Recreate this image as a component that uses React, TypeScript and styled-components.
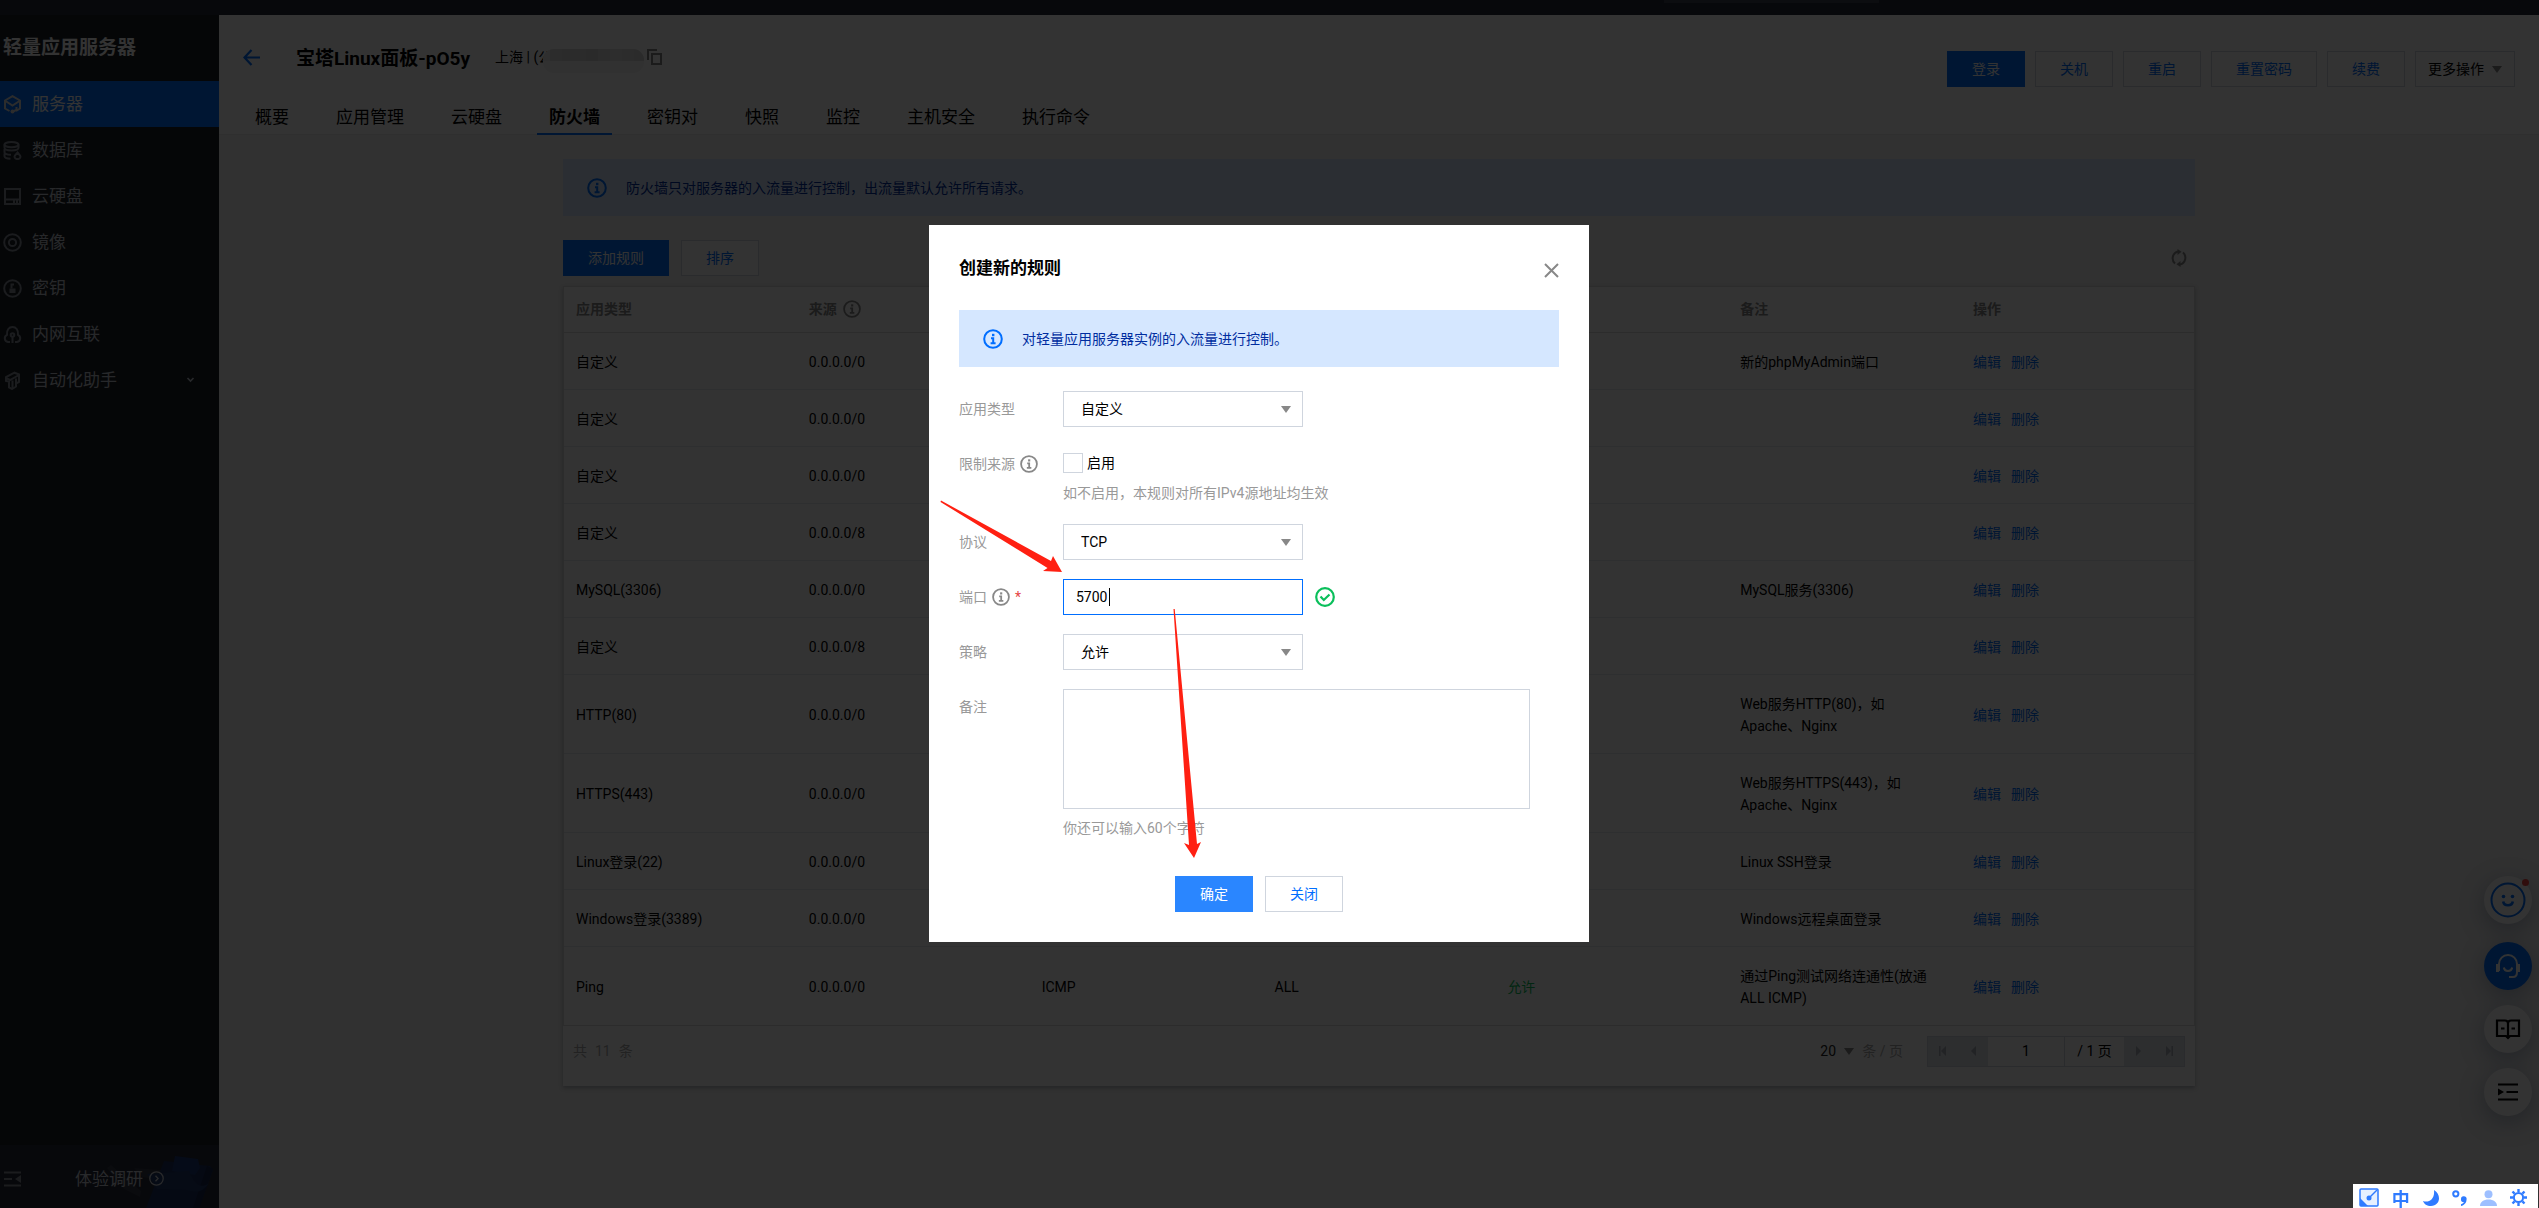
import React from "react";
import styled, { createGlobalStyle, css } from "styled-components";

const color = {
  primary: "#006eff",
  ink: "#000",
  muted: "#888",
  soft: "#999",
  faint: "#aaa",
  line: "#cfd5de",
  softLine: "#e7eaef",
  notice: "#d5e7ff",
  noticeText: "#002da0",
  side: "#1a1f27",
};

const GlobalStyle = createGlobalStyle`
  *, *::before, *::after { box-sizing: border-box; }
  body {
    margin: 0;
    background: #f2f2f2;
    color: ${color.ink};
    font: 14px/22px Roboto, "Noto Sans CJK SC", sans-serif;
  }
  button, input, select, textarea { font: inherit; color: inherit; margin: 0; }
  a { color: inherit; text-decoration: none; }
  svg { display: block; flex: none; }
`;

/* ---------- shared parts ---------- */

const Button = styled.button<{ $primary?: boolean; $bright?: boolean; $menu?: boolean }>`
  display: inline-flex;
  align-items: center;
  justify-content: center;
  gap: 8px;
  height: 36px;
  padding: 0 ${(p) => (p.$menu ? 12 : 24)}px;
  border: 1px solid ${color.line};
  background: #fff;
  color: ${(p) => (p.$menu ? color.ink : color.primary)};
  white-space: nowrap;
  cursor: pointer;
  ${(p) =>
    p.$primary &&
    css`
      border-color: ${p.$bright ? "#2a86ff" : color.primary};
      background: ${p.$bright ? "#2a86ff" : color.primary};
      color: #fff;
    `}
`;

const IconButton = styled.button`
  display: flex;
  padding: 0;
  border: 0;
  background: none;
  cursor: pointer;
`;

const Notice = styled.div`
  display: flex;
  align-items: center;
  gap: 19px;
  height: 57px;
  padding: 0 24px;
  background: ${color.notice};
  color: ${color.noticeText};
`;

const InfoIcon = ({ size = 18, tint = color.muted }: { size?: number; tint?: string }) => (
  <svg width={size} height={size} viewBox="0 0 20 20" fill="none" stroke={tint}>
    <circle cx="10" cy="10" r="8.8" strokeWidth="2" />
    <path d="M10.2 4.8v2.4" strokeWidth="2.4" />
    <path d="M8 9.2h2.2v5M7.600 14.2h5" strokeWidth="2" />
  </svg>
);

const Caret = ({ tint = color.muted }: { tint?: string }) => (
  <svg width="10" height="7" viewBox="0 0 10 7">
    <path d="M0 0h10L5 7z" fill={tint} />
  </svg>
);

/* ---------- page frame ---------- */

const Page = styled.div`
  display: flex;
  flex-direction: column;
  min-height: 100vh;
`;

const TopBar = styled.div`
  height: 15px;
  background: #262b3b;
`;

const TopBarTab = styled.div`
  width: 215px;
  height: 3px;
  margin: 0 660px 0 auto;
  background: #3c4150;
`;

const Columns = styled.div`
  display: flex;
  flex: 1;
`;

/* ---------- side navigation ---------- */

const Sidebar = styled.aside`
  display: flex;
  flex-direction: column;
  flex: none;
  width: 219px;
  background: ${color.side};
`;

const SideTitle = styled.h1`
  margin: 0;
  padding-left: 3px;
  color: #fff;
  font-size: 19px;
  line-height: 66px;
`;

const SideLink = styled.a<{ $active?: boolean }>`
  display: flex;
  align-items: center;
  gap: 10px;
  height: 46px;
  padding: 0 24px 0 3px;
  font-size: 17px;
  background: ${(p) => (p.$active ? color.primary : "transparent")};
  color: ${(p) => (p.$active ? "#fff" : "#c4c8d0")};
`;

const SideLabel = styled.span`
  flex: 1;
`;

const SideFoot = styled.div`
  position: relative;
  display: flex;
  align-items: center;
  height: 63px;
  margin-top: auto;
  padding: 4px 0 0 4px;
  overflow: hidden;
  background: #242838;
  color: #c9ccd4;
`;

const SurveyLink = styled.a`
  position: relative;
  display: flex;
  align-items: center;
  gap: 6px;
  margin-left: 54px;
  font-size: 17px;
`;

const Artwork = styled.svg`
  position: absolute;
  right: 0;
  bottom: 0;
`;

const strokeIcon = {
  width: 19,
  height: 19,
  viewBox: "0 0 19 19",
  fill: "none",
  stroke: "currentColor",
  strokeWidth: 2,
};

const dim = "#868b96";

const sideItems = [
  {
    label: "服务器",
    active: true,
    icon: (
      <svg {...strokeIcon} stroke="#ddd">
        <path d="M6.500 16L2 13.500V5.500L9.500 1.200 17 5.500v8L13 16" />
        <path d="M2.500 6L9.500 10.500 16.500 6" />
        <circle cx="9.500" cy="16.500" r="2" fill="#ddd" stroke="none" />
        <path d="M9.500 16.500l4-1.500v-3" />
      </svg>
    ),
  },
  {
    label: "数据库",
    icon: (
      <svg {...strokeIcon} stroke={dim}>
        <ellipse cx="8.500" cy="3.600" rx="7" ry="2.600" />
        <path d="M1.500 3.600v3.200c0 1.600 3 2.700 7 2.700s7-1.100 7-2.700V3.600" />
        <path d="M1.500 8v3.200c0 1.400 2.600 2.400 6.500 2.600M1.500 12.500v2.700c0 1.400 2.200 2.300 6 2.600" />
        <path d="M14.500 11.500l2.600 3a2.300 2.300 0 0 1-1.600 3.500h-2a2.300 2.300 0 0 1-1.600-3.500z" />
      </svg>
    ),
  },
  {
    label: "云硬盘",
    icon: (
      <svg {...strokeIcon} stroke={dim}>
        <path d="M2 2h15v15H2zM2 12.500h15M11 13v4M14 13v4" />
      </svg>
    ),
  },
  {
    label: "镜像",
    icon: (
      <svg {...strokeIcon} stroke={dim}>
        <circle cx="9.500" cy="9.500" r="8.300" />
        <circle cx="9.500" cy="9.500" r="3.600" />
      </svg>
    ),
  },
  {
    label: "密钥",
    icon: (
      <svg {...strokeIcon} stroke={dim}>
        <circle cx="9.500" cy="9.500" r="8.300" />
        <path d="M8.500 9.500V5.500h2.500" />
        <path d="M6.500 9.500h6v4.500h-6z" fill={dim} stroke="none" />
      </svg>
    ),
  },
  {
    label: "内网互联",
    icon: (
      <svg {...strokeIcon} stroke={dim}>
        <path d="M7 17H5a3.800 3.800 0 0 1-1-7.200C3.600 4.800 6 2 9.500 2s5.900 2.800 5.500 7.800A3.800 3.800 0 0 1 14 17h-2" />
        <circle cx="9.500" cy="10" r="1.800" />
        <path d="M9.500 11v7" />
      </svg>
    ),
  },
  {
    label: "自动化助手",
    expandable: true,
    icon: (
      <svg {...strokeIcon} stroke={dim}>
        <path d="M3 10V6l8.500-4.300L16 3.500V11l-3 1.500v3L9 18l-3-1.500v-6z" />
        <path d="M3 7l4 2 9-5M9.500 9.500V17M13 7.500v6" />
      </svg>
    ),
  },
];

const Side = () => (
  <Sidebar>
    <SideTitle>轻量应用服务器</SideTitle>
    <nav>
      {sideItems.map((item) => (
        <SideLink key={item.label} href="#" $active={item.active}>
          {item.icon}
          <SideLabel>{item.label}</SideLabel>
          {item.expandable && (
            <svg width="9" height="6" viewBox="0 0 9 6" fill="none" stroke="currentColor" strokeWidth="1.6">
              <path d="M1.500 1l3 3 3-3" />
            </svg>
          )}
        </SideLink>
      ))}
    </nav>
    <SideFoot>
      <Artwork width="120" height="56" viewBox="0 0 120 56">
        <path d="M8 16l4-3 30 26-1 6-16-8zM35 16l40 3-8 10-24-4z" fill="#343946" />
        <path d="M47 56L65 9l10 1 36 4 3 4-14 38z" fill="#1b2f5e" />
        <path d="M108 14l6 3-14 39h-6z" fill="#14244c" />
        <path d="M76 4l23 3 2 9-5 7-23-4z" fill="#1d3a78" />
        <path d="M48 22l42-3c6 14 12 18 20 12-6 10-14 10-22 7l-30-1z" fill="#1f3768" />
      </Artwork>
      <IconButton aria-label="收起菜单">
        <svg width="17" height="16" viewBox="0 0 17 16" fill="none" stroke={dim} strokeWidth="2">
          <path d="M0 1.500h17M0 14.500h17M0 8h8" />
          <path d="M17 4v8l-6-4z" fill={dim} stroke="none" />
        </svg>
      </IconButton>
      <SurveyLink href="#">
        体验调研
        <svg width="15" height="15" viewBox="0 0 15 15" fill="none" stroke="currentColor" strokeWidth="1.3">
          <circle cx="7.500" cy="7.500" r="6.700" />
          <path d="M6.500 4.800l2.600 2.700-2.600 2.700" />
        </svg>
      </SurveyLink>
    </SideFoot>
  </Sidebar>
);

/* ---------- instance header ---------- */

const Main = styled.main`
  flex: 1;
  min-width: 0;
`;

const Header = styled.header`
  background: #fff;
  border-bottom: 1px solid #e8e8e8;
`;

const InfoRow = styled.div`
  display: flex;
  align-items: center;
  height: 84px;
  padding: 0 24px;
`;

const InstanceName = styled.h2`
  margin: 4px 0 0 36px;
  font-size: 19px;
  line-height: 24px;
  white-space: nowrap;
`;

const Region = styled.div`
  display: flex;
  align-items: center;
  gap: 3px;
  margin-left: 25px;
  white-space: nowrap;
`;

const Mask = styled.svg`
  margin: 8px 0 0 -12px;
`;

const Actions = styled.div`
  display: flex;
  gap: 10px;
  margin: 24px 0 0 auto;
`;

const Tabs = styled.nav`
  display: flex;
  gap: 23px;
  height: 35px;
  padding-left: 24px;
`;

const Tab = styled.a<{ $active?: boolean }>`
  height: 36px;
  padding: 0 12px;
  border-bottom: 2px solid ${(p) => (p.$active ? color.primary : "transparent")};
  font-size: 17px;
  line-height: 36px;
  font-weight: ${(p) => (p.$active ? 700 : 400)};
`;

const tabs = ["概要", "应用管理", "云硬盘", "防火墙", "密钥对", "快照", "监控", "主机安全", "执行命令"];

const maskTiles = ["#e8e8e8", "#dcdcdc", "#d4d4d4", "#d8d8d8", "#d2d2d2", "#d9d9d9", "#dedede", "#dadada", "#d6d6d6"];

const InstanceHeader = () => (
  <Header>
    <InfoRow>
      <IconButton aria-label="返回">
        <svg width="17" height="17" viewBox="0 0 17 17" fill="none" stroke={color.primary} strokeWidth="2.2">
          <path d="M17 8.500H2M8.500 1L1.500 8.500l7 7.500" />
        </svg>
      </IconButton>
      <InstanceName>宝塔Linux面板-pO5y</InstanceName>
      <Region>
        <span>上海 | (公</span>
        <Mask width="101" height="24" viewBox="0 0 101 24">
          <clipPath id="mask">
            <rect width="101" height="24" rx="11" />
          </clipPath>
          <g clipPath="url(#mask)">
            <rect width="101" height="24" fill="#f5f5f5" />
            {maskTiles.map((fill, i) => (
              <rect key={i} x={i * 12 - 5} width="12" height="12" fill={fill} />
            ))}
          </g>
        </Mask>
        <IconButton aria-label="复制">
          <svg width="15" height="16" viewBox="0 0 15 16" fill="none" stroke={color.muted} strokeWidth="2">
            <path d="M1 11V1h9M5 5h9v10H5z" />
          </svg>
        </IconButton>
      </Region>
      <Actions>
        <Button $primary>登录</Button>
        <Button>关机</Button>
        <Button>重启</Button>
        <Button>重置密码</Button>
        <Button>续费</Button>
        <Button $menu>
          更多操作
          <Caret />
        </Button>
      </Actions>
    </InfoRow>
    <Tabs>
      {tabs.map((t) => (
        <Tab key={t} href="#" $active={t === "防火墙"}>
          {t}
        </Tab>
      ))}
    </Tabs>
  </Header>
);

/* ---------- rules table ---------- */

const Content = styled.section`
  max-width: 1632px;
  margin: 0 auto;
  padding: 24px 0;
`;

const Toolbar = styled.div`
  display: flex;
  align-items: center;
  gap: 12px;
  margin: 24px 0 10px;
`;

const RefreshButton = styled(IconButton)`
  margin: 0 8px 0 auto;
`;

const Card = styled.div`
  background: #fff;
  box-shadow: 0 2px 4px rgba(54, 58, 80, 0.32);
`;

const Table = styled.table`
  width: 100%;
  border: 1px solid #ddd;
  border-collapse: separate;
  border-spacing: 0;
  table-layout: fixed;
`;

const Th = styled.th`
  padding: 11px 12px 12px;
  border-bottom: 1px solid #ddd;
  color: ${color.muted};
  text-align: left;
`;

const Td = styled.td`
  padding: 18px 12px 16px;
  border-bottom: 1px solid ${color.softLine};
  tr:last-child & {
    border-bottom: 0;
  }
`;

const Inline = styled.span`
  display: flex;
  align-items: center;
  gap: 6px;
`;

const RowLinks = styled.span`
  display: flex;
  gap: 10px;
  color: ${color.primary};
`;

const Allowed = styled.span`
  color: #0abf5b;
`;

const Footer = styled.div`
  display: flex;
  align-items: center;
  height: 60px;
  padding: 0 10px 10px;
  color: ${color.faint};
`;

const Total = styled.span`
  display: flex;
  gap: 8px;
  margin-right: auto;
`;

const PageSize = styled.label`
  position: relative;
  display: flex;
  align-items: center;
  margin-right: 24px;
`;

const SizeSelect = styled.select`
  width: 42px;
  padding: 0;
  border: 0;
  background: none;
  color: #222;
  appearance: none;
`;

const SizeCaret = styled.span`
  position: absolute;
  left: 24px;
  pointer-events: none;
`;

const Pager = styled.div`
  display: flex;
  height: 31px;
  border: 1px solid ${color.line};
  color: ${color.ink};
  > * + * {
    border-left: 1px solid ${color.line};
  }
`;

const PagerButton = styled.button`
  display: flex;
  align-items: center;
  justify-content: center;
  width: 30px;
  padding: 0;
  border: 0;
  background: #dfe3e9;
`;

const PagerInput = styled.input`
  width: 76px;
  padding: 0;
  border: 0;
  background: #fff;
  text-align: center;
`;

const PagerTotal = styled.span`
  width: 60px;
  line-height: 29px;
  text-align: center;
`;

const PagerArrow = ({ back, bar }: { back?: boolean; bar?: boolean }) => (
  <svg width="10" height="12" viewBox="0 0 10 12" fill="#a9afb8">
    <path d={back ? "M8 1v10L3 6z" : "M2 1v10l5-5z"} />
    {bar && <path d={back ? "M1 1h1.500v10H1z" : "M7.500 1H9v10H7.500z"} />}
  </svg>
);

type Rule = { type: string; source: string; protocol: string; port: string; remark: string[] };

const rule = (type: string, source: string, protocol: string, port: string, ...remark: string[]): Rule => ({
  type,
  source,
  protocol,
  port,
  remark,
});

const rules: Rule[] = [
  rule("自定义", "0.0.0.0/0", "TCP", "888", "新的phpMyAdmin端口"),
  rule("自定义", "0.0.0.0/0", "TCP", "8888"),
  rule("自定义", "0.0.0.0/0", "TCP", "8080"),
  rule("自定义", "0.0.0.0/8", "TCP", "21"),
  rule("MySQL(3306)", "0.0.0.0/0", "TCP", "3306", "MySQL服务(3306)"),
  rule("自定义", "0.0.0.0/8", "TCP", "20"),
  rule("HTTP(80)", "0.0.0.0/0", "TCP", "80", "Web服务HTTP(80)，如", "Apache、Nginx"),
  rule("HTTPS(443)", "0.0.0.0/0", "TCP", "443", "Web服务HTTPS(443)，如", "Apache、Nginx"),
  rule("Linux登录(22)", "0.0.0.0/0", "TCP", "22", "Linux SSH登录"),
  rule("Windows登录(3389)", "0.0.0.0/0", "TCP", "3389", "Windows远程桌面登录"),
  rule("Ping", "0.0.0.0/0", "ICMP", "ALL", "通过Ping测试网络连通性(放通", "ALL ICMP)"),
];

const Firewall = () => (
  <Content>
    <Notice>
      <InfoIcon size={20} tint={color.primary} />
      防火墙只对服务器的入流量进行控制，出流量默认允许所有请求。
    </Notice>
    <Toolbar>
      <Button $primary>添加规则</Button>
      <Button>排序</Button>
      <RefreshButton aria-label="刷新">
        <svg width="16" height="18" viewBox="0 0 16 18" fill="none" stroke={color.muted} strokeWidth="2">
          <path d="M4 14.500A7 7 0 0 1 7 2.500M12 3.500a7 7 0 0 1-3 12" />
          <path d="M6.500 0v6l4-3.200zM9.500 18v-6l-4 3.200z" fill={color.muted} stroke="none" />
        </svg>
      </RefreshButton>
    </Toolbar>
    <Card>
      <Table>
        <thead>
          <tr>
            <Th>应用类型</Th>
            <Th>
              <Inline>
                来源 <InfoIcon />
              </Inline>
            </Th>
            <Th>协议</Th>
            <Th>端口</Th>
            <Th>策略</Th>
            <Th>备注</Th>
            <Th>操作</Th>
          </tr>
        </thead>
        <tbody>
          {rules.map((r, i) => (
            <tr key={i}>
              <Td>{r.type}</Td>
              <Td>{r.source}</Td>
              <Td>{r.protocol}</Td>
              <Td>{r.port}</Td>
              <Td>
                <Allowed>允许</Allowed>
              </Td>
              <Td>
                {r.remark.map((line, n) => (
                  <div key={n}>{line}</div>
                ))}
              </Td>
              <Td>
                <RowLinks>
                  <a href="#">编辑</a>
                  <a href="#">删除</a>
                </RowLinks>
              </Td>
            </tr>
          ))}
        </tbody>
      </Table>
      <Footer>
        <Total>
          <span>共</span>
          <span>11</span>
          <span>条</span>
        </Total>
        <PageSize>
          <SizeSelect defaultValue="20">
            <option>20</option>
            <option>50</option>
          </SizeSelect>
          <SizeCaret>
            <Caret />
          </SizeCaret>
          条 / 页
        </PageSize>
        <Pager>
          <PagerButton aria-label="首页">
            <PagerArrow back bar />
          </PagerButton>
          <PagerButton aria-label="上一页">
            <PagerArrow back />
          </PagerButton>
          <PagerInput aria-label="页码" defaultValue="1" />
          <PagerTotal>/ 1 页</PagerTotal>
          <PagerButton aria-label="下一页">
            <PagerArrow />
          </PagerButton>
          <PagerButton aria-label="末页">
            <PagerArrow bar />
          </PagerButton>
        </Pager>
      </Footer>
    </Card>
  </Content>
);

/* ---------- floating helpers ---------- */

const FloatBar = styled.div`
  position: fixed;
  right: 7px;
  bottom: 92px;
  display: flex;
  flex-direction: column;
  gap: 15px;
`;

const FloatButton = styled.button<{ $primary?: boolean }>`
  position: relative;
  display: flex;
  align-items: center;
  justify-content: center;
  width: 48px;
  height: 48px;
  padding: 0;
  border: 0;
  border-radius: 50%;
  background: ${(p) => (p.$primary ? color.primary : "#fff")};
  box-shadow: 0 6px 24px rgba(60, 80, 120, 0.4);
  &:first-child {
    margin-bottom: 3px;
  }
`;

const Dot = styled.span`
  position: absolute;
  top: 3px;
  right: 3px;
  width: 7px;
  height: 7px;
  border-radius: 50%;
  background: #f0413c;
`;

const Helpers = () => (
  <FloatBar>
    <FloatButton aria-label="反馈">
      <svg width="36" height="36" viewBox="0 0 36 36" fill="none" stroke={color.primary} strokeWidth="2">
        <circle cx="18" cy="18" r="16.500" />
        <path d="M13.200 19.500c.8 5 8.800 5 9.600 0" strokeWidth="2.600" />
        <circle cx="13.500" cy="14.500" r="1.800" fill={color.primary} stroke="none" />
        <circle cx="22.500" cy="14.500" r="1.800" fill={color.primary} stroke="none" />
      </svg>
      <Dot />
    </FloatButton>
    <FloatButton $primary aria-label="客服">
      <svg width="26" height="26" viewBox="0 0 26 26" fill="none" stroke="#fff" strokeWidth="2">
        <path d="M4 18V11a9 9 0 0 1 18 0v8c0 3-1 5-4 5h-4" />
        <path d="M1 11h3v8H1zM22 11h3v8h-3z" fill="#fff" stroke="none" />
        <path d="M8.800 14.500c.8 4.500 7.600 4.500 8.400 0" />
      </svg>
    </FloatButton>
    <FloatButton aria-label="文档">
      <svg width="26" height="22" viewBox="0 0 26 22" fill="none" stroke="#000" strokeWidth="2.2">
        <path d="M2 2.500h8c2 0 3 1 3 3 0-2 1-3 3-3h8v15.500h-9l-2 2-2-2H2zM13 5v14" />
        <path d="M6 10.500h3.500M16.500 10.500H20" />
      </svg>
    </FloatButton>
    <FloatButton aria-label="目录">
      <svg width="20" height="18" viewBox="0 0 20 18" fill="none" stroke="#000" strokeWidth="2.2">
        <path d="M0 1.500h20M8.500 9H20M0 16.500h20" />
        <path d="M0 5.500v7L6 9z" fill="#000" stroke="none" />
      </svg>
    </FloatButton>
  </FloatBar>
);

/* ---------- dialog ---------- */

const Overlay = styled.div`
  position: fixed;
  inset: 0;
  display: flex;
  align-items: flex-start;
  justify-content: center;
  padding: 225px 21px 0 0;
  background: rgba(0, 0, 0, 0.8);
`;

const Dialog = styled.form`
  position: relative;
  width: 660px;
  padding: 30px;
  background: #fff;
`;

const DialogHead = styled.div`
  display: flex;
  align-items: center;
  justify-content: space-between;
  height: 26px;
  margin-bottom: 29px;
`;

const DialogTitle = styled.h3`
  margin: 0;
  font-size: 17px;
`;

const CloseButton = styled(IconButton)`
  padding-top: 4px;
`;

const Fields = styled.div`
  display: grid;
  grid-template-columns: 104px 1fr;
  row-gap: 19px;
  margin-top: 24px;
`;

const Label = styled.label`
  display: flex;
  align-items: center;
  gap: 5px;
  height: 36px;
  color: ${color.soft};
`;

const Required = styled.span`
  color: #e54545;
`;

const Control = styled.div`
  position: relative;
`;

const Select = styled.select`
  display: block;
  width: 240px;
  height: 36px;
  padding: 0 17px;
  border: 1px solid ${color.line};
  border-radius: 0;
  background: #fff;
  appearance: none;
`;

const SelectCaret = styled.span`
  position: absolute;
  top: 15px;
  left: 218px;
  pointer-events: none;
`;

const CheckLabel = styled.label`
  display: flex;
  align-items: center;
  gap: 4px;
  height: 36px;
  padding-bottom: 2px;
`;

const Checkbox = styled.input`
  width: 20px;
  height: 20px;
  border: 1px solid ${color.line};
  background: #fff;
  appearance: none;
`;

const Hint = styled.div`
  line-height: 23px;
  color: ${color.soft};
`;

const PortRow = styled.div`
  position: relative;
  display: flex;
  align-items: center;
  gap: 12px;
`;

const PortInput = styled.input`
  width: 240px;
  height: 36px;
  padding: 0 12px;
  border: 1px solid ${color.primary};
  border-radius: 0;
  outline: 0;
`;

const TextCursor = styled.span`
  position: absolute;
  top: 9px;
  left: 46px;
  width: 1px;
  height: 18px;
  background: #000;
`;

const Remark = styled.textarea`
  display: block;
  width: 467px;
  height: 120px;
  margin-bottom: 8px;
  border: 1px solid ${color.line};
  border-radius: 0;
  resize: none;
`;

const DialogFoot = styled.div`
  display: flex;
  justify-content: center;
  gap: 12px;
  margin-top: 36px;
`;

const Annotations = styled.svg`
  position: absolute;
  top: 0;
  left: 0;
  pointer-events: none;
`;

const SelectField = ({ id, options }: { id: string; options: string[] }) => (
  <Control>
    <Select id={id}>
      {options.map((o) => (
        <option key={o}>{o}</option>
      ))}
    </Select>
    <SelectCaret>
      <Caret />
    </SelectCaret>
  </Control>
);

const RuleDialog = () => (
  <Overlay>
    <Dialog role="dialog" aria-labelledby="dialog-title" onSubmit={(e) => e.preventDefault()}>
      <DialogHead>
        <DialogTitle id="dialog-title">创建新的规则</DialogTitle>
        <CloseButton type="button" aria-label="关闭窗口">
          <svg width="15" height="15" viewBox="0 0 15 15" stroke={color.muted} strokeWidth="2">
            <path d="M1 1l13 13M14 1L1 14" />
          </svg>
        </CloseButton>
      </DialogHead>
      <Notice>
        <InfoIcon size={20} tint={color.primary} />
        对轻量应用服务器实例的入流量进行控制。
      </Notice>
      <Fields>
        <Label htmlFor="app">应用类型</Label>
        <SelectField id="app" options={["自定义", "HTTP(80)", "HTTPS(443)"]} />

        <Label htmlFor="limit">
          限制来源 <InfoIcon />
        </Label>
        <div>
          <CheckLabel>
            <Checkbox id="limit" type="checkbox" />
            启用
          </CheckLabel>
          <Hint>如不启用，本规则对所有IPv4源地址均生效</Hint>
        </div>

        <Label htmlFor="protocol">协议</Label>
        <SelectField id="protocol" options={["TCP", "UDP", "ICMP"]} />

        <Label htmlFor="port">
          端口 <InfoIcon /> <Required>*</Required>
        </Label>
        <PortRow>
          <PortInput id="port" defaultValue="5700" />
          <TextCursor />
          <svg width="20" height="20" viewBox="0 0 20 20" fill="none" stroke="#0abf5b" strokeWidth="2.2">
            <circle cx="10" cy="10" r="8.800" />
            <path d="M5.500 9.500l3.300 3.500 5.700-5.500" />
          </svg>
        </PortRow>

        <Label htmlFor="policy">策略</Label>
        <SelectField id="policy" options={["允许", "拒绝"]} />

        <Label htmlFor="remark">备注</Label>
        <div>
          <Remark id="remark" />
          <Hint>你还可以输入60个字符</Hint>
        </div>
      </Fields>
      <DialogFoot>
        <Button $primary $bright>
          确定
        </Button>
        <Button type="button">关闭</Button>
      </DialogFoot>
      <Annotations width="660" height="717" viewBox="0 0 660 717" fill="#ff2012">
        <path d="M12 275.500L122 336l2-5 9 16-19-1 4.500-3L11.500 277z" />
        <path d="M244.500 384h1.200L268 619l4-2-7 16-10-15 5 2z" />
      </Annotations>
    </Dialog>
  </Overlay>
);

/* ---------- input method bar ---------- */

const ImeBar = styled.div`
  position: fixed;
  right: 1px;
  bottom: 0;
  display: flex;
  align-items: center;
  justify-content: space-between;
  width: 185px;
  height: 24px;
  padding: 3px 11px 0 6px;
  background: #fff;
  color: #2f7bff;
`;

const ImeMode = styled.span`
  font: 700 18px/20px "Noto Sans CJK SC", sans-serif;
`;

const Ime = () => (
  <ImeBar>
    <svg width="20" height="19" viewBox="0 0 20 19" fill="none" stroke="currentColor">
      <rect x="1" y="1" width="18" height="17" rx="1" fill="#e6f0ff" strokeWidth="1.500" />
      <path d="M18 2l-8 8" strokeWidth="1.500" />
      <circle cx="10" cy="10" r="2.500" fill="currentColor" stroke="none" />
      <path d="M1 10l8 8H1z" fill="currentColor" stroke="none" />
    </svg>
    <ImeMode>中</ImeMode>
    <svg width="17" height="16" viewBox="0 0 17 16" fill="currentColor">
      <path d="M11 0c8 5 6 16-3 16-4 0-7-2-8-5 6 2 12-2 11-11z" />
    </svg>
    <svg width="15" height="16" viewBox="0 0 15 16" fill="none" stroke="currentColor">
      <circle cx="3.800" cy="3.800" r="2.600" strokeWidth="2" />
      <path d="M9 9a2.800 2.800 0 1 1 5.500.8C14.500 13 12 15.500 9 16v-1.800c1.800-.5 2.600-1.200 2.800-2.200A2.800 2.800 0 0 1 9 9z" fill="currentColor" stroke="none" />
    </svg>
    <svg width="17" height="16" viewBox="0 0 17 16" fill="#9dbfff">
      <circle cx="8.500" cy="4.200" r="4" />
      <path d="M0 16c0-4 3.500-6.500 8.500-6.500S17 12 17 16z" />
    </svg>
    <svg width="17" height="17" viewBox="0 0 17 17" fill="none" stroke="currentColor">
      <circle cx="8.500" cy="8.500" r="4.600" strokeWidth="2" />
      <path
        d="M8.500 0v3M8.500 14v3M0 8.500h3M14 8.500h3M2.500 2.500l2.100 2.100M12.400 12.400l2.100 2.100M14.500 2.500l-2.100 2.100M4.600 12.400l-2.100 2.100"
        strokeWidth="2.400"
      />
    </svg>
  </ImeBar>
);

export default function App() {
  return (
    <>
      <GlobalStyle />
      <Page>
        <TopBar>
          <TopBarTab />
        </TopBar>
        <Columns>
          <Side />
          <Main>
            <InstanceHeader />
            <Firewall />
          </Main>
        </Columns>
      </Page>
      <Helpers />
      <RuleDialog />
      <Ime />
    </>
  );
}
